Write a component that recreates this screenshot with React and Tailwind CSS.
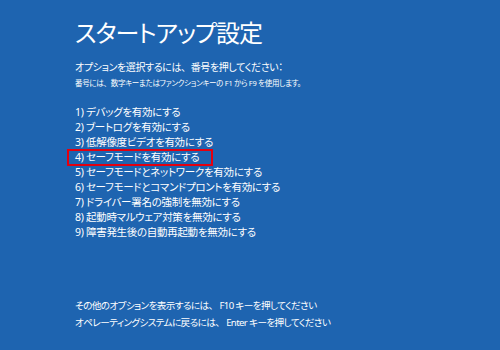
const options = [
  "デバッグを有効にする",
  "ブートログを有効にする",
  "低解像度ビデオを有効にする",
  "セーフモードを有効にする",
  "セーフモードとネットワークを有効にする",
  "セーフモードとコマンドプロントを有効にする",
  "ドライバー署名の強制を無効にする",
  "起動時マルウェア対策を無効にする",
  "障害発生後の自動再起動を無効にする",
];

// keep the full-width comma wide, like the boot screen does
const Comma = () => <span className="[font-feature-settings:normal]">、</span>;

export default function App() {
  return (
    <div className="w-[500px] h-[350px] bg-[#1e64b0] text-white font-['Noto_Sans','Noto_Sans_CJK_JP',sans-serif] [font-feature-settings:'palt'] flex flex-col pl-[75px] pt-[17px]">
      <h1 className="text-[24px] leading-[32px] tracking-[-1px]">スタートアップ設定</h1>
      <p className="mt-[11px] text-[10px] leading-[14px] tracking-[-0.4px]">
        オプションを選択するには<Comma />番号を押してください：
      </p>
      <p className="mt-[3px] text-[7.5px] leading-[12px] tracking-[-0.3px]">
        番号には<Comma />数字キーまたはファンクションキーの F1 から F9 を使用します。
      </p>

      <ul className="mt-[16px] -ml-[7px] flex flex-col">
        {options.map((label, i) => (
          <li
            key={i}
            className={
              i === 3
                ? "h-[15px] w-[144px] pl-[7px] text-[10.5px] leading-[15px] tracking-[-0.3px] outline-2 outline-[#e4000f] outline-offset-[-1px]"
                : "h-[15px] pl-[7px] text-[10.5px] leading-[15px] tracking-[-0.3px]"
            }
          >
            {i + 1}) {label}
          </li>
        ))}
      </ul>

      <div className="mt-auto mb-[19px] flex flex-col text-[9.6px] leading-[17px] tracking-[-0.6px]">
        <p>その他のオプションを表示するには<Comma /> F10 キーを押してください</p>
        <p>オペレーティングシステムに戻るには<Comma /> Enter キーを押してください</p>
      </div>
    </div>
  );
}
